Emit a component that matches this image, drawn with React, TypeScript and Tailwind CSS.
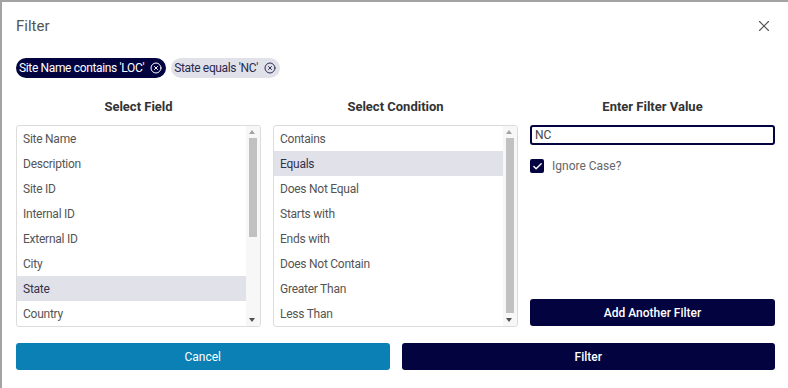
import { X, CircleX, Check } from "lucide-react";

const fields = ["Site Name", "Description", "Site ID", "Internal ID", "External ID", "City", "State", "Country"];
const conditions = ["Contains", "Equals", "Does Not Equal", "Starts with", "Ends with", "Does Not Contain", "Greater Than", "Less Than"];

function Chip({ label, active }: { label: string; active?: boolean }) {
  return (
    <div
      className={`flex h-[20px] items-center gap-[6px] rounded-full pl-[3px] pr-[4px] text-[12px] tracking-[-0.35px] ${active ? "bg-[#03033f] text-white" : "bg-[#e1e1ea] text-[#2a2a50]"}`}
    >
      <span>{label}</span>
      <CircleX className="h-[12px] w-[12px]" strokeWidth={2} />
    </div>
  );
}

function ListBox({ items, selected, thumbTop, thumbHeight }: {
  items: string[];
  selected: string;
  thumbTop: number;
  thumbHeight: number;
}) {
  return (
    <div className="flex h-[202px] overflow-hidden rounded-[3px] border border-[#dcdcdc] bg-white">
      <div className="flex-1">
        {items.map((item) => (
          <div
            key={item}
            className={`flex h-[25px] items-center pl-[6px] text-[12px] tracking-[-0.25px] ${item === selected ? "bg-[#e1e1ea] text-[#33334d]" : "text-[#555]"}`}
          >
            {item}
          </div>
        ))}
      </div>
      <div className="relative w-[14px] bg-[#f7f7f7]">
        <div className="absolute left-[3px] top-[4px] h-0 w-0 border-x-[3px] border-b-[4px] border-x-transparent border-b-[#a3a3a3]" />
        <div
          className="absolute left-[3px] w-[8px] bg-[#c1c1c1]"
          style={{ top: thumbTop, height: thumbHeight }}
        />
        <div className="absolute bottom-[4px] left-[3px] h-0 w-0 border-x-[3px] border-t-[4px] border-x-transparent border-t-[#505050]" />
      </div>
    </div>
  );
}

function Heading({ children }: { children: string }) {
  return (
    <div className="mb-[10px] h-[16px] text-center text-[13px] font-bold leading-[16px] text-[#333]">
      {children}
    </div>
  );
}

export default function App() {
  return (
    <div className="h-[388px] w-[788px] bg-[#a3a3a3] pl-[2px] pt-[2px] font-['Roboto',sans-serif]">
      <div className="h-full bg-white pl-[14px] pr-[13px]">
        <div className="flex h-[48px] items-center justify-between">
          <h1 className="text-[15px] text-[#555]">Filter</h1>
          <X className="mr-[2px] h-[18px] w-[18px] text-[#555]" strokeWidth={1.5} />
        </div>

        <div className="mt-[8px] flex gap-[5px]">
          <Chip label="Site Name contains 'LOC'" active />
          <Chip label="State equals 'NC'" />
        </div>

        <div className="mt-[21px] grid grid-cols-3 gap-[12px]">
          <div>
            <Heading>Select Field</Heading>
            <ListBox items={fields} selected="State" thumbTop={12} thumbHeight={99} />
          </div>
          <div>
            <Heading>Select Condition</Heading>
            <ListBox items={conditions} selected="Equals" thumbTop={12} thumbHeight={175} />
          </div>
          <div>
            <Heading>Enter Filter Value</Heading>
            <div className="flex h-[202px] flex-col">
              <div className="flex h-[20px] items-center rounded-[3px] border-2 border-[#03033f] pl-[3px] text-[12px] text-[#444]">
                NC
              </div>
              <label className="mt-[12px] flex items-center gap-[8px] text-[12px] text-[#666]">
                <span className="flex h-[14px] w-[14px] items-center justify-center rounded-[2px] bg-[#03033f]">
                  <Check className="h-[11px] w-[11px] text-white" strokeWidth={3} />
                </span>
                Ignore Case?
              </label>
              <button className="mt-auto mb-[1px] h-[27px] w-full rounded-[3px] bg-[#03033f] text-[12px] font-medium text-white">
                Add Another Filter
              </button>
            </div>
          </div>
        </div>

        <div className="mt-[16px] grid grid-cols-2 gap-[12px]">
          <button className="h-[27px] rounded-[3px] bg-[#0a80b4] text-[12px] text-white">Cancel</button>
          <button className="h-[27px] rounded-[3px] bg-[#03033f] text-[12px] font-medium text-white">Filter</button>
        </div>
      </div>
    </div>
  );
}
